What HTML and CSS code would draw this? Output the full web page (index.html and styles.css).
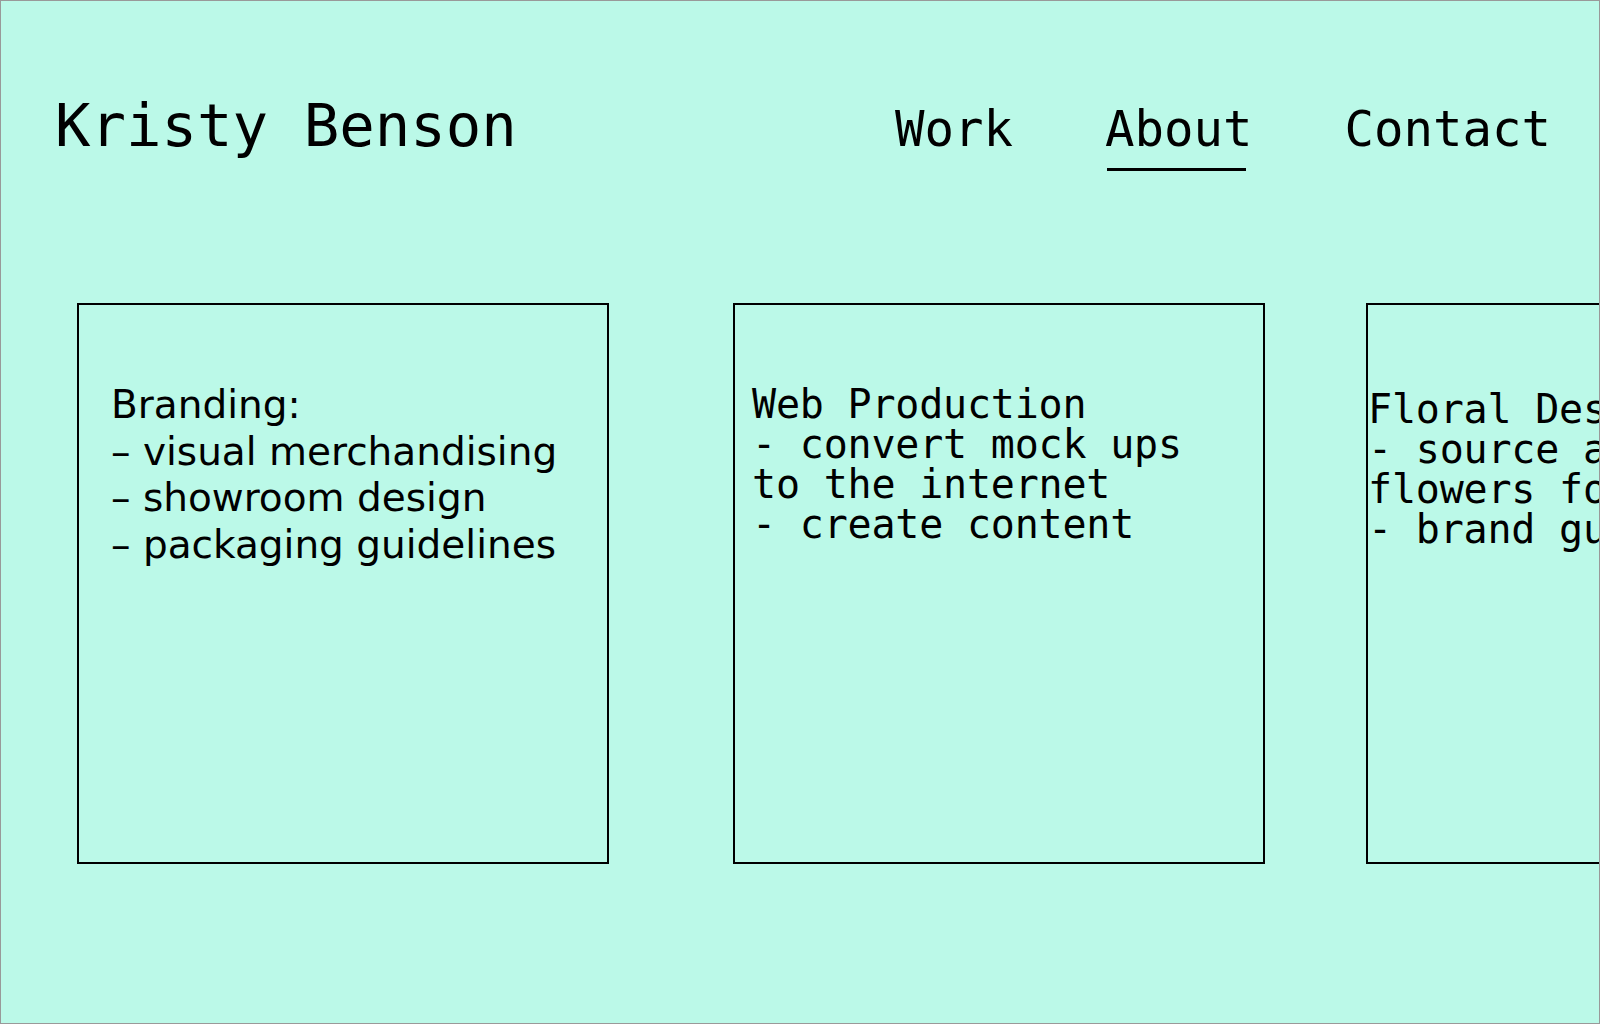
FILE: index.html
```html
<!DOCTYPE html>
<html lang="en">
<head>
    <meta charset="UTF-8">
    <title>Kristy Benson</title>
    <link rel="stylesheet" href="styles.css">
</head>
<body>
    <div class="header">
        <div class="logo">Kristy Benson</div>
        <div class="nav">
            <a href="javascript:;">Work</a>
            <a href="javascript:;" class="current">About</a>
            <a href="javascript:;">Contact</a>
        </div>
    </div>
    <div class="cards">
        <div class="card branding">
            Branding:<br>
            – visual merchandising<br>
            – showroom design<br>
            – packaging guidelines
        </div>
        <div class="card web">
            Web Production<br>
            - convert mock ups<br>
            to the internet<br>
            - create content
        </div>
        <div class="card floral">
            Floral Design<br>
            - source and arrange<br>
            flowers for events<br>
            - brand guidelines
        </div>
    </div>
</body>
</html>
```

FILE: styles.css
```css
html {
    background-color: #bbf9e8;
}
body {
    margin: 0;
    width: 1600px;
    height: 1024px;
    box-sizing: border-box;
    border: 1px solid #999;
    overflow: hidden;
    background-color: #bbf9e8;
    color: #000;
    font-family: "DejaVu Sans Mono", monospace;
}
.header {
    display: flex;
    justify-content: space-between;
    align-items: baseline;
    height: 212px;
    padding: 90px 48px 0 54px;
}
.logo {
    font-size: 59px;
    line-height: 70px;
    white-space: nowrap;
}
.nav {
    display: flex;
    align-items: baseline;
    gap: 92px;
}
.nav a {
    display: inline-block;
    font-size: 49px;
    line-height: 57px;
    color: #000;
    text-decoration: none;
}
/*当前页下划线*/
.nav a.current::after {
    content: "";
    display: block;
    height: 3px;
    margin: 10px 6px 0 2px;
    background-color: #000;
}
.cards {
    display: flex;
    padding-left: 76px;
}
.card {
    flex-shrink: 0;
    width: 532px;
    height: 561px;
    box-sizing: border-box;
    border: 2px solid #000;
    white-space: nowrap;
}
.branding {
    margin-right: 124px;
    padding: 77px 0 0 32px;
    font-family: "DejaVu Sans", sans-serif;
    font-size: 39px;
    line-height: 46.5px;
}
.web {
    margin-right: 101px;
    padding: 79px 0 0 17px;
    font-size: 40px;
    line-height: 40px;
    letter-spacing: -0.2px;
}
.floral {
    padding: 84px 0 0 0;
    font-size: 40px;
    line-height: 40px;
    letter-spacing: -0.2px;
}
```
